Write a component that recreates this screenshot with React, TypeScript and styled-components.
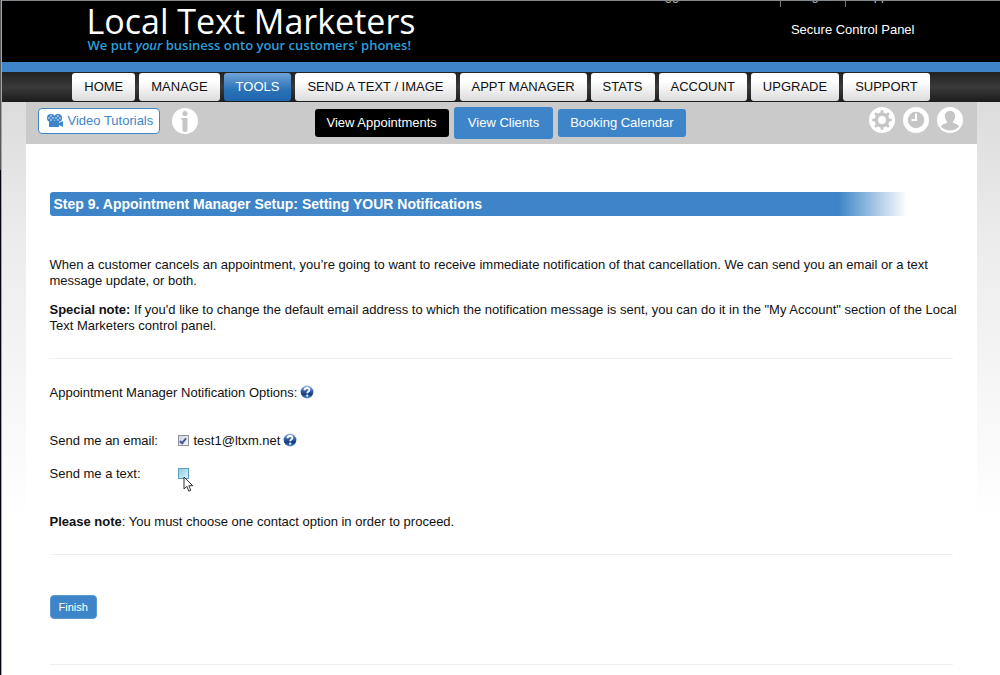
import React from "react";
import styled, { createGlobalStyle, css } from "styled-components";

const GlobalStyle = createGlobalStyle`
  *, *::before, *::after { box-sizing: border-box; }
  body {
    margin: 0;
    background: #fff;
    color: #111;
    font: 13px/16px "Liberation Sans", Arial, sans-serif;
  }
  button, input { font: inherit; margin: 0; }
`;

const blue = "#3d85c8";

const Shell = styled.div`
  min-height: 100vh;
  padding-left: 1px;
  background: linear-gradient(#55585c 170px, #04040f 170px);
`;

const Page = styled.div`
  min-height: 100vh;
  border-left: 1px solid #a4a6aa;
  background: linear-gradient(#dcdcdc 102px, #ececec 240px, #fff 520px);
`;

const Header = styled.header`
  height: 62px;
  background: #000;
  border-top: 1px solid #85888c;
  overflow: hidden;
  color: #fff;
`;

const HeaderInner = styled.div`
  max-width: 829px;
  margin: 0 auto;
`;

const Account = styled.div`
  display: flex;
  align-items: flex-end;
  justify-content: flex-end;
  height: 6px;
`;

const AccountLink = styled.a<{ $wide?: boolean }>`
  padding: 0 ${(p) => (p.$wide ? 72 : 16)}px 5px;
  color: #bbb;
  line-height: 13px;
  text-decoration: none;
  & + & { border-left: 1px solid #777; }
  &:last-child { padding-right: 12px; padding-left: 12px; }
`;

const Brand = styled.div`
  display: flex;
  justify-content: space-between;
`;

const Title = styled.h1`
  margin: 0;
  font: 500 34px/28px "Open Sans", sans-serif;
`;

const Tagline = styled.p`
  margin: 0;
  padding-left: 1px;
  color: #2a9fdc;
  font: 600 13px/20px "Open Sans", sans-serif;
`;

const PanelName = styled.span`
  padding: 15px 1px 0 0;
`;

const Nav = styled.nav`
  display: flex;
  justify-content: center;
  gap: 4px;
  padding: 1px 0;
  border-top: 10px solid ${blue};
  background: linear-gradient(#222, #3a3a3a 50%, #1c1c1c);
`;

const NavLink = styled.a<{ $active?: boolean }>`
  padding: 0 12px;
  border-radius: 3px;
  color: #111;
  line-height: 28px;
  text-decoration: none;
  background: linear-gradient(#fff 30%, #dcdcdc);
  ${(p) =>
    p.$active &&
    css`
      color: #fff;
      background: linear-gradient(#6fa3d6, #2a72b8 60%, #1f66ae);
    `}
`;

const Main = styled.main`
  max-width: 951px;
  min-height: 573px;
  margin: 0 auto;
  background: #fff;
`;

const Toolbar = styled.div`
  display: grid;
  grid-template-columns: 1fr auto 1fr;
  height: 42px;
  padding: 0 14px 0 12px;
  background: #cacaca;
`;

const Group = styled.div<{ $end?: boolean; $gap: number }>`
  display: flex;
  align-items: center;
  justify-content: ${(p) => (p.$end ? "flex-end" : "flex-start")};
  gap: ${(p) => p.$gap}px;
  padding-bottom: ${(p) => (p.$end ? 6 : 4)}px;
`;

const Tabs = styled.div`
  display: flex;
  align-items: center;
  gap: 5px;
`;

const Tab = styled.button<{ $kind?: "current" | "hover" }>`
  height: ${(p) => (p.$kind === "hover" ? 32 : 28)}px;
  padding: 0 ${(p) => (p.$kind === "hover" ? 14 : 12)}px;
  border: 0;
  border-radius: 3px;
  color: #fff;
  background: ${(p) => (p.$kind === "current" ? "#000" : blue)};
`;

const VideoButton = styled.button`
  display: flex;
  align-items: center;
  gap: 4px;
  height: 26px;
  padding: 0 6px 0 8px;
  border: 1px solid ${blue};
  border-radius: 4px;
  color: ${blue};
  background: #fff;
`;

const IconButton = styled.button`
  display: flex;
  padding: 0;
  border: 0;
  background: none;
`;

const Content = styled.div`
  padding: 48px 24px 0;
`;

const StepHeading = styled.h2`
  width: 95%;
  margin: 0 0 41px;
  padding: 0 4px;
  border-radius: 3px;
  color: #fff;
  font-size: 14px;
  line-height: 24px;
  background: linear-gradient(to right, ${blue} 92%, #fff);
`;

const Paragraph = styled.p`
  margin: 0 -8px 13px 0;
`;

const Rule = styled.hr`
  margin: 24px 0 26px;
  border: 0;
  border-top: 1px solid #efefef;
`;

const OptionsTitle = styled.div`
  display: flex;
  gap: 3px;
  margin-bottom: 32px;
`;

const Row = styled.div`
  display: grid;
  grid-template-columns: 128px 16px auto 1fr;
  align-items: center;
  margin-bottom: 17px;
`;

const Field = styled.div`
  position: relative;
  display: flex;
`;

const Check = styled.input<{ $hover?: boolean }>`
  appearance: none;
  display: grid;
  place-items: center;
  width: 11px;
  height: 11px;
  margin-bottom: 2px;
  border: 1px solid ${(p) => (p.$hover ? "#5c9fbd" : "#8f9499")};
  background: ${(p) =>
    p.$hover
      ? "linear-gradient(135deg, #8fcbe4, #d8f3fb)"
      : "linear-gradient(135deg, #cfd4da, #f5f6f8)"};
  &:checked::before {
    content: "";
    width: 4px;
    height: 7px;
    border: solid #47579a;
    border-width: 0 2px 2px 0;
    transform: rotate(40deg);
  }
`;

const Pointer = styled.svg`
  position: absolute;
  left: 5px;
  top: 8px;
  z-index: 1;
`;

const HelpButton = styled(IconButton)`
  width: 14px;
  height: 14px;
  margin-left: 3px;
  margin-bottom: 2px;
`;

const Note = styled.p`
  margin: 32px 0 0;
`;

const Finish = styled.button`
  display: block;
  height: 24px;
  margin: 40px 0 45px;
  padding: 0 8px;
  border: 1px solid #5b98d2;
  border-radius: 4px;
  color: #fff;
  font-size: 11px;
  background: ${blue};
`;

const CameraIcon = () => (
  <svg width="17" height="14" viewBox="0 0 17 14" aria-hidden="true">
    <g fill={blue}>
      <circle cx="4" cy="4" r="4" />
      <circle cx="11" cy="4" r="4" />
      <path d="M2 7h10v2l4-2v6l-4-2v2H2z" />
    </g>
    <g fill="#fff">
      <circle cx="4" cy="2" r=".8" />
      <circle cx="4" cy="6" r=".8" />
      <circle cx="2" cy="4" r=".8" />
      <circle cx="6" cy="4" r=".8" />
      <circle cx="11" cy="2" r=".8" />
      <circle cx="11" cy="6" r=".8" />
      <circle cx="9" cy="4" r=".8" />
      <circle cx="13" cy="4" r=".8" />
    </g>
  </svg>
);

const grey = "#c6c6c6";

const Disc = ({ children }: { children: React.ReactNode }) => (
  <svg width="26" height="26" viewBox="0 0 26 26" aria-hidden="true">
    <circle cx="13" cy="13" r="13" fill="#fff" />
    {children}
  </svg>
);

const InfoIcon = () => (
  <Disc>
    <circle cx="13" cy="5.5" r="2.6" fill={grey} />
    <path d="M9.5 10h6v11.5a2.5 2.5 0 0 1-5 0V12h-1z" fill={grey} />
  </Disc>
);

const GearIcon = () => (
  <Disc>
    <circle cx="13" cy="13" r="5.7" fill="none" stroke={grey} strokeWidth="3.4" />
    {[0, 45, 90, 135, 180, 225, 270, 315].map((a) => (
      <path key={a} d="M11.2 6.5l.7-3.3h2.2l.7 3.3z" fill={grey} transform={`rotate(${a} 13 13)`} />
    ))}
  </Disc>
);

const ClockIcon = () => (
  <Disc>
    <circle cx="13" cy="13" r="8.3" fill={grey} />
    <path d="M13 6.5V13H8.5" fill="none" stroke="#fff" strokeWidth="2" />
  </Disc>
);

const UserIcon = () => (
  <Disc>
    <path
      d="M13 4c3.400 0 5.200 2.200 5.200 5.200 0 2.200-1 4-2.200 5.200v1.300c1.800 1 5 1.300 6.200 3.600-1.800 2.600-5 4.200-9.200 4.200s-7.400-1.600-9.200-4.200c1.200-2.300 4.400-2.600 6.200-3.600v-1.300c-1.200-1.200-2.200-3-2.200-5.200C7.800 6.200 9.600 4 13 4z"
      fill={grey}
    />
  </Disc>
);

const HelpIcon = () => (
  <svg width="14" height="14" viewBox="0 0 14 14" aria-hidden="true">
    <defs>
      <linearGradient id="orb" x1="0" y1="0" x2="0" y2="1">
        <stop offset="0" stopColor="#9dbbe0" />
        <stop offset=".45" stopColor="#2d5a9e" />
        <stop offset=".7" stopColor="#143c80" />
        <stop offset="1" stopColor="#5c9bd8" />
      </linearGradient>
    </defs>
    <circle cx="7" cy="7" r="6.400" fill="url(#orb)" />
    <path
      d="M4.600 5.200C4.700 3.600 5.700 3 7 3c1.400 0 2.400.8 2.400 2 0 1.600-2.200 1.600-2.200 3.300"
      fill="none"
      stroke="#fff"
      strokeWidth="1.800"
    />
    <circle cx="7.200" cy="10.600" r="1.100" fill="#fff" />
  </svg>
);

const Help = () => (
  <HelpButton type="button" aria-label="Help">
    <HelpIcon />
  </HelpButton>
);

const links = [
  "HOME",
  "MANAGE",
  "TOOLS",
  "SEND A TEXT / IMAGE",
  "APPT MANAGER",
  "STATS",
  "ACCOUNT",
  "UPGRADE",
  "SUPPORT",
];

export default function App() {
  return (
    <Shell>
      <GlobalStyle />
      <Page>
        <Header>
          <HeaderInner>
            <Account>
              <AccountLink href="#" $wide>Logged In</AccountLink>
              <AccountLink href="#">Login</AccountLink>
              <AccountLink href="#">Support</AccountLink>
            </Account>
            <Brand>
              <div>
                <Title>Local Text Marketers</Title>
                <Tagline>
                  We put <em>your</em> business onto your customers' phones!
                </Tagline>
              </div>
              <PanelName>Secure Control Panel</PanelName>
            </Brand>
          </HeaderInner>
        </Header>
        <Nav>
          {links.map((name) => (
            <NavLink key={name} href="#" $active={name === "TOOLS"}>
              {name}
            </NavLink>
          ))}
        </Nav>
        <Main>
          <Toolbar>
            <Group $gap={12}>
              <VideoButton type="button">
                <CameraIcon />
                Video Tutorials
              </VideoButton>
              <IconButton type="button" aria-label="Information">
                <InfoIcon />
              </IconButton>
            </Group>
            <Tabs>
              <Tab type="button" $kind="current">View Appointments</Tab>
              <Tab type="button" $kind="hover">View Clients</Tab>
              <Tab type="button">Booking Calendar</Tab>
            </Tabs>
            <Group $end $gap={8}>
              <IconButton type="button" aria-label="Settings">
                <GearIcon />
              </IconButton>
              <IconButton type="button" aria-label="History">
                <ClockIcon />
              </IconButton>
              <IconButton type="button" aria-label="Profile">
                <UserIcon />
              </IconButton>
            </Group>
          </Toolbar>
          <Content>
            <StepHeading>Step 9. Appointment Manager Setup: Setting YOUR Notifications</StepHeading>
            <Paragraph>
              When a customer cancels an appointment, you’re going to want to receive immediate
              notification of that cancellation. We can send you an email or a text message update,
              or both.
            </Paragraph>
            <Paragraph>
              <strong>Special note:</strong> If you'd like to change the default email address to
              which the notification message is sent, you can do it in the "My Account" section of
              the Local Text Marketers control panel.
            </Paragraph>
            <Rule />
            <OptionsTitle>
              Appointment Manager Notification Options:
              <HelpIcon />
            </OptionsTitle>
            <Row>
              <label htmlFor="by-email">Send me an email:</label>
              <Check id="by-email" type="checkbox" defaultChecked />
              <span>test1@ltxm.net</span>
              <Help />
            </Row>
            <Row>
              <label htmlFor="by-text">Send me a text:</label>
              <Field>
                <Check id="by-text" type="checkbox" $hover />
                <Pointer width="11" height="17" viewBox="0 0 11 17" aria-hidden="true">
                  <path
                    d="M1 1v12l2.800-2.600 2 4.800 2-.9-2-4.600H9.700z"
                    fill="#fff"
                    stroke="#333"
                    strokeWidth="1"
                  />
                </Pointer>
              </Field>
            </Row>
            <Note>
              <strong>Please note</strong>: You must choose one contact option in order to proceed.
            </Note>
            <Rule />
            <Finish type="button">Finish</Finish>
            <Rule />
          </Content>
        </Main>
      </Page>
    </Shell>
  );
}
